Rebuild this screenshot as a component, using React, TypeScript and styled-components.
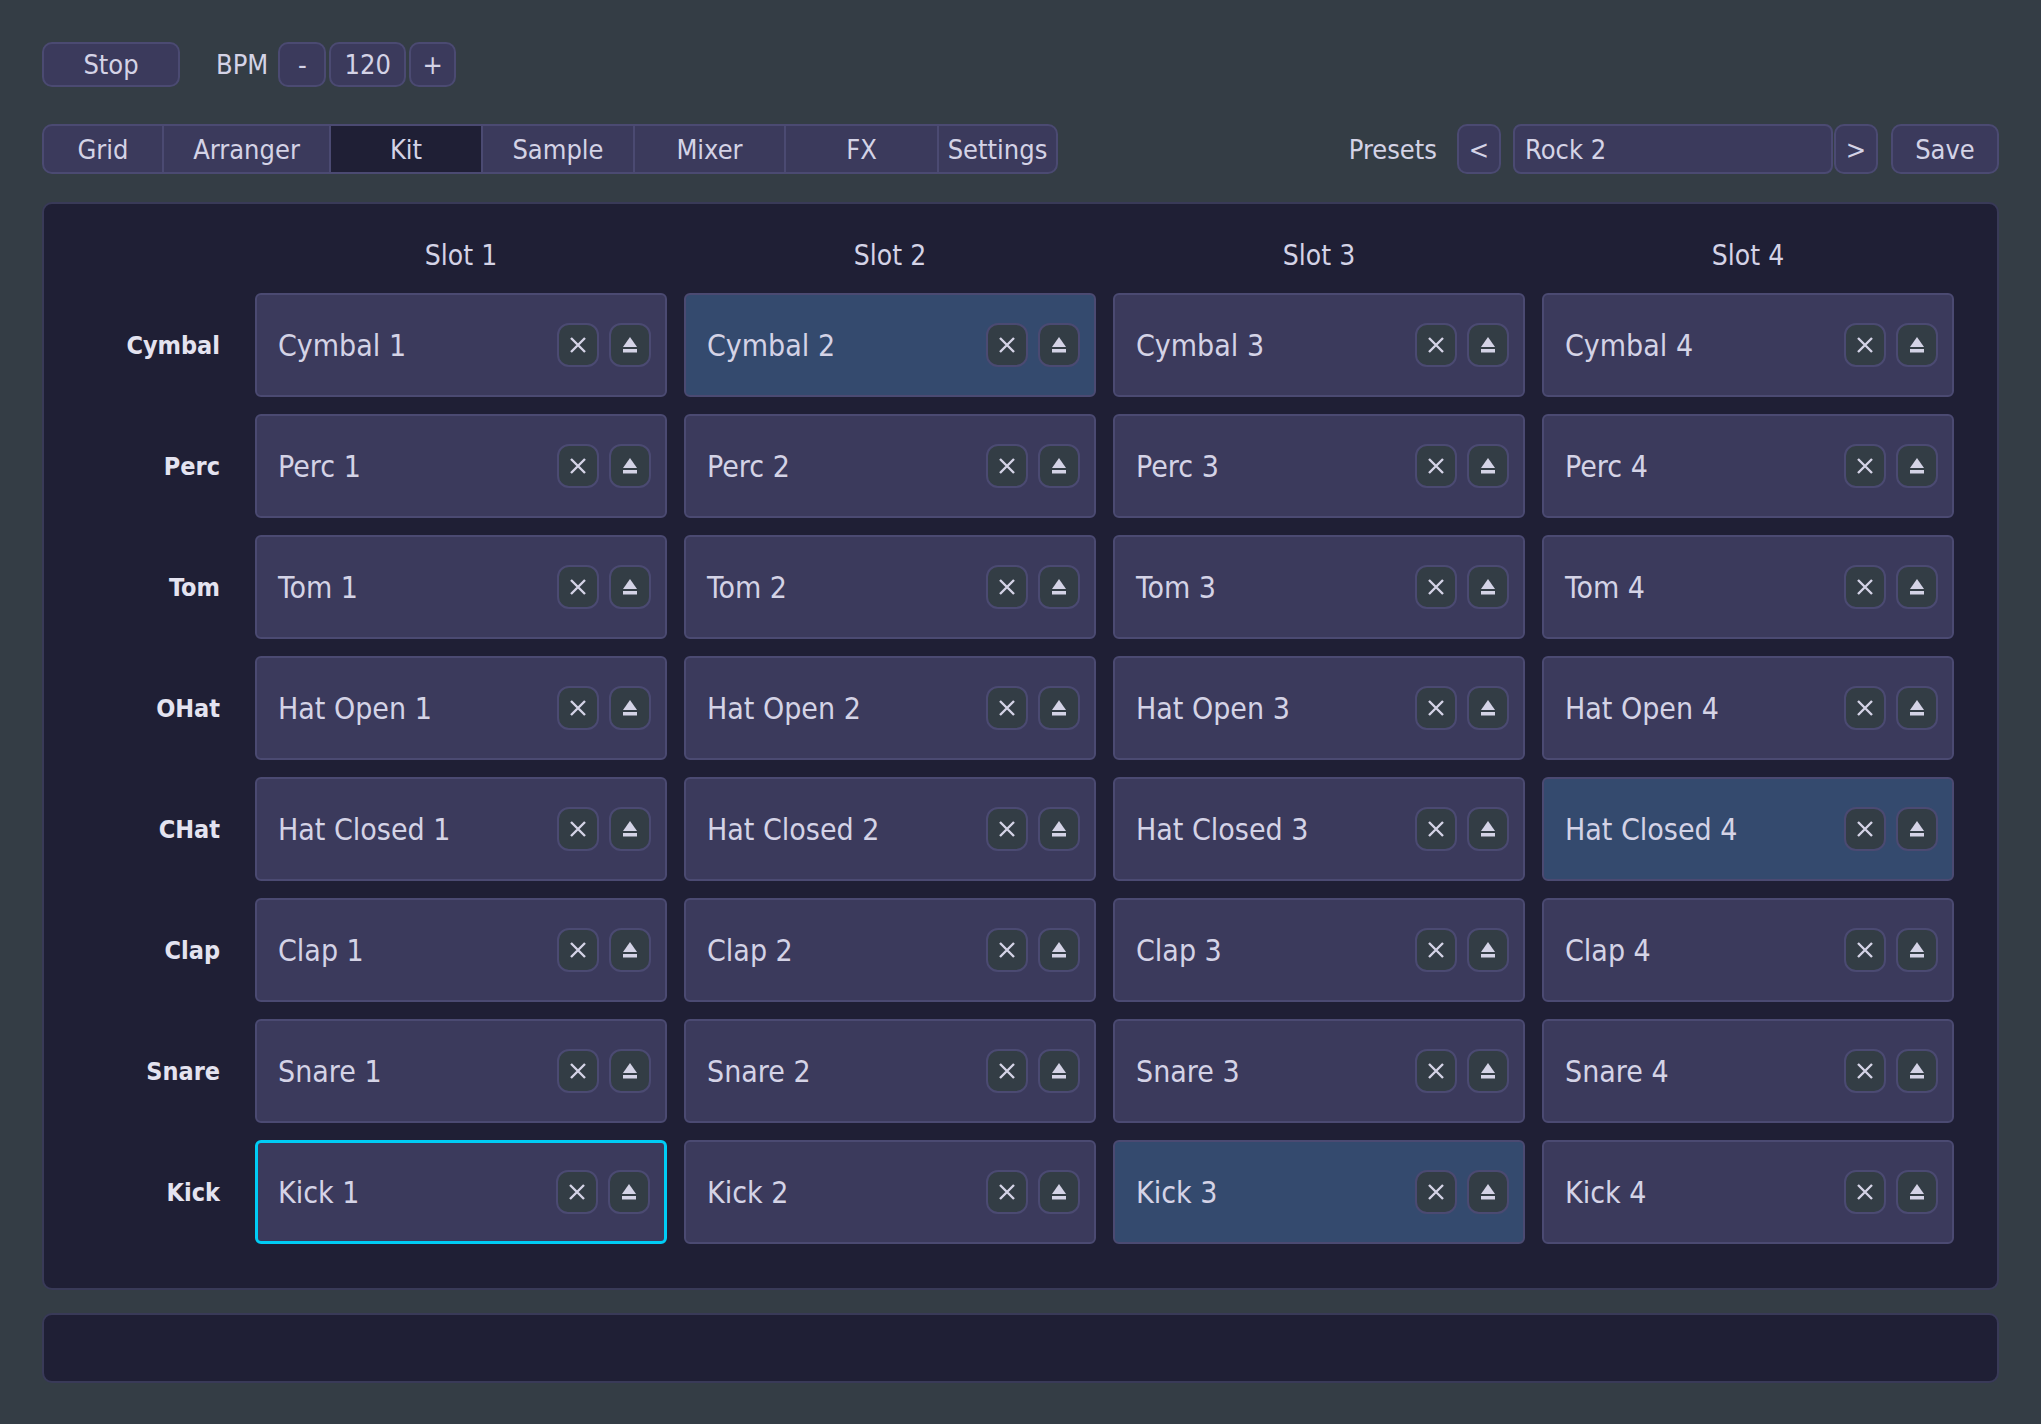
import React from "react";
import styled, { createGlobalStyle, css } from "styled-components";

const Global = createGlobalStyle`
  html, body { margin: 0; padding: 0; background: #343d45; }
  body { font-family: "DejaVu Sans Condensed", "DejaVu Sans", sans-serif; font-stretch: condensed; color: #d4d3e6; }
  * { box-sizing: border-box; }
`;

const Page = styled.div`
  width: 2041px; height: 1424px; padding: 42px 42px 0 42px; display: flex; flex-direction: column;
`;
const TopBar = styled.div`display: flex; align-items: center; height: 45px;`;
const Btn = styled.button<{ w?: number }>`
  font: inherit; font-size: 27px; color: #d4d3e6; background: #3b3a5c; border: 2px solid #4b4a72;
  border-radius: 10px; height: 45px; width: ${p => p.w ?? 46}px; padding: 0; display: flex; align-items: center; justify-content: center;
`;
const Label = styled.span<{ ml?: number; mr?: number }>`
  font-size: 27px; margin-left: ${p => p.ml ?? 0}px; margin-right: ${p => p.mr ?? 0}px;
`;
const Row2 = styled.div`display: flex; align-items: center; margin-top: 37px; height: 50px;`;
const Tabs = styled.div`
  display: flex; height: 50px; border: 2px solid #4b4a72; border-radius: 10px; overflow: hidden; background: #3b3a5c;
`;
const Tab = styled.div<{ w: number; active?: boolean }>`
  width: ${p => p.w}px; display: flex; align-items: center; justify-content: center; font-size: 27px; white-space: nowrap;
  border-left: 2px solid #4b4a72; &:first-child { border-left: none; }
  ${p => p.active && css`background: #1f1f35;`}
`;
const Spacer = styled.div`flex: 1;`;
const PresetBox = styled.div`
  width: 320px; height: 50px; background: #3b3a5c; border: 2px solid #4b4a72; border-radius: 8px;
  display: flex; align-items: center; padding-left: 10px; font-size: 27px; margin: 0 1px 0 12px;
`;
const Panel = styled.div`
  margin-top: 28px; height: 1088px; background: #1f1f35; border: 2px solid #393a58; border-radius: 10px;
  padding: 32px 43px 0 0; display: grid; grid-template-columns: 194px repeat(4, 412px);
  grid-template-rows: 40px repeat(8, 104px); column-gap: 17px; row-gap: 17px;
`;
const Head = styled.div`display: flex; align-items: center; justify-content: center; font-size: 28px; margin-bottom: 2px;`;
const RowLabel = styled.div`
  display: flex; align-items: center; justify-content: flex-end; padding-right: 18px; font-size: 25px; font-weight: bold; color: #e4e3f0;
`;
const Cell = styled.div<{ hl?: boolean; sel?: boolean }>`
  background: ${p => (p.hl ? "#344a6e" : "#3b3a5c")}; border: 2px solid ${p => (p.sel ? "#00ccf5" : "#4b4a72")};
  border-radius: 6px; display: flex; align-items: center; padding: 0 14px 0 ${p => (p.sel ? 20 : 21)}px; font-size: 30px; gap: 10px;
  ${p => p.sel && css`border-width: 3px;`}
`;
const Name = styled.span`flex: 1;`;
const Icon = styled.div`
  width: 42px; height: 44px; border-radius: 12px; background: #333d45; border: 2px solid #4b4a72;
  display: flex; align-items: center; justify-content: center;
`;
const Bottom = styled.div`
  margin-top: 23px; height: 70px; background: #1f1f35; border: 2px solid #393a58; border-radius: 10px;
`;

const XIcon = () => (
  <svg width="20" height="20" viewBox="0 0 20 20"><path d="M3 3L17 17M17 3L3 17" stroke="#d4d3e6" strokeWidth="2.4" /></svg>
);
const Eject = () => (
  <svg width="20" height="20" viewBox="0 0 20 20"><path d="M10 2L17 12H3Z" fill="#d4d3e6" /><rect x="3" y="14" width="14" height="3.5" fill="#d4d3e6" /></svg>
);

const rows = [
  ["Cymbal", "Cymbal"], ["Perc", "Perc"], ["Tom", "Tom"], ["OHat", "Hat Open"], ["CHat", "Hat Closed"],
  ["Clap", "Clap"], ["Snare", "Snare"], ["Kick", "Kick"],
];
const hl = new Set(["0-1", "4-3", "7-2"]);

export default function App() {
  return (
    <Page>
      <Global />
      <TopBar>
        <Btn w={138}>Stop</Btn>
        <Label ml={36} mr={10}>BPM</Label>
        <Btn w={48}>-</Btn>
        <Btn w={77} style={{ marginLeft: 3 }}>120</Btn>
        <Btn w={47} style={{ marginLeft: 3 }}>+</Btn>
      </TopBar>
      <Row2>
        <Tabs>
          {[["Grid", 118], ["Arranger", 167], ["Kit", 152], ["Sample", 152], ["Mixer", 151], ["FX", 153], ["Settings", 119]].map(([t, w], i) => (
            <Tab key={t as string} w={w as number} active={i === 2}>{t}</Tab>
          ))}
        </Tabs>
        <Spacer />
        <Label mr={20}>Presets</Label>
        <Btn w={44} style={{ height: 50 }}>&lt;</Btn>
        <PresetBox>Rock 2</PresetBox>
        <Btn w={44} style={{ height: 50 }}>&gt;</Btn>
        <Btn w={108} style={{ height: 50, marginLeft: 13 }}>Save</Btn>
      </Row2>
      <Panel>
        <div />
        {[1, 2, 3, 4].map(n => <Head key={n}>Slot {n}</Head>)}
        {rows.map(([lab, name], r) => (
          <React.Fragment key={lab}>
            <RowLabel>{lab}</RowLabel>
            {[1, 2, 3, 4].map(c => (
              <Cell key={c} hl={hl.has(`${r}-${c - 1}`)} sel={r === 7 && c === 1}>
                <Name>{name} {c}</Name>
                <Icon><XIcon /></Icon>
                <Icon><Eject /></Icon>
              </Cell>
            ))}
          </React.Fragment>
        ))}
      </Panel>
      <Bottom />
    </Page>
  );
}
